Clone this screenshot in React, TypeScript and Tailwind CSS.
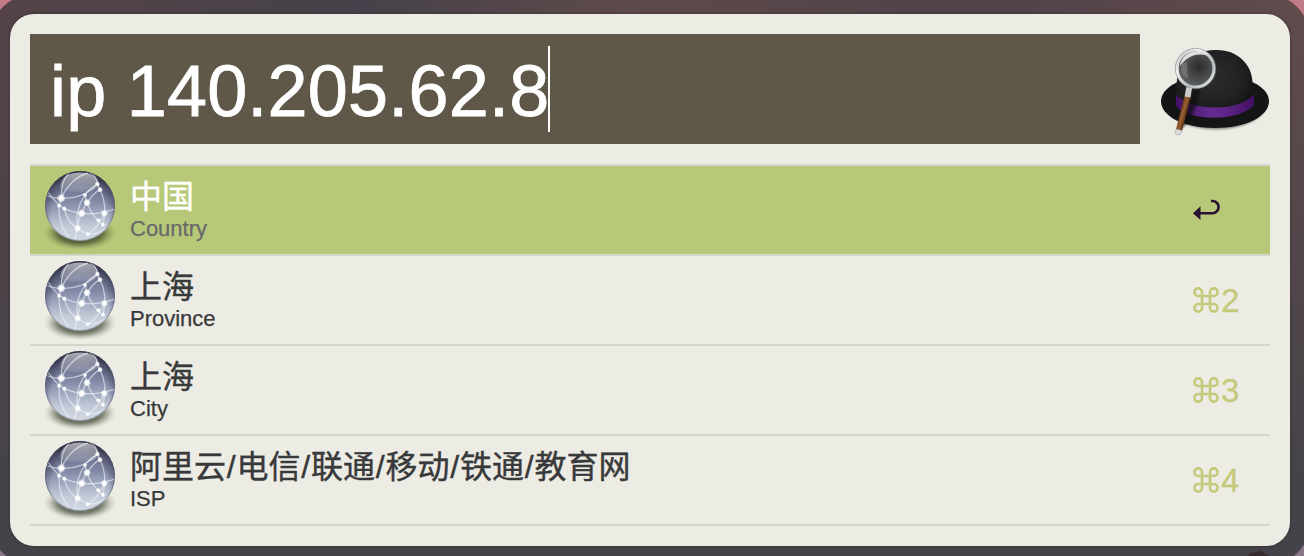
import React from "react";

function Globe() {
  return (
    <svg className="h-[88px] w-[80px] shrink-0" viewBox="0 0 80 88">
      <defs>
        <linearGradient id="sphere" x1="0" y1="0" x2="0" y2="1">
          <stop offset="0" stopColor="#555870" />
          <stop offset=".2" stopColor="#6e7490" />
          <stop offset=".42" stopColor="#8087a5" />
          <stop offset=".6" stopColor="#a0a8bf" />
          <stop offset=".8" stopColor="#c4ccd9" />
          <stop offset="1" stopColor="#d2d9e3" />
        </linearGradient>
        <radialGradient id="vignette" gradientUnits="userSpaceOnUse" cx="40" cy="50" r="46">
          <stop offset=".62" stopColor="#1c1c30" stopOpacity="0" />
          <stop offset=".82" stopColor="#1c1c30" stopOpacity=".38" />
          <stop offset="1" stopColor="#1c1c2c" stopOpacity=".85" />
        </radialGradient>
        <linearGradient id="gloss" x1="0" y1="0" x2="0" y2="1">
          <stop offset="0" stopColor="#fff" stopOpacity=".6" />
          <stop offset="1" stopColor="#fff" stopOpacity=".08" />
        </linearGradient>
        <radialGradient id="shade">
          <stop offset="0" stopColor="#26301a" stopOpacity=".95" />
          <stop offset=".6" stopColor="#26301a" stopOpacity=".6" />
          <stop offset=".85" stopColor="#26301a" stopOpacity=".15" />
          <stop offset="1" stopColor="#26301a" stopOpacity="0" />
        </radialGradient>
        <radialGradient id="spot">
          <stop offset="0" stopColor="#fff" />
          <stop offset=".5" stopColor="#fff" stopOpacity=".95" />
          <stop offset="1" stopColor="#fff" stopOpacity="0" />
        </radialGradient>
        <clipPath id="disc"><circle cx="40" cy="40" r="34.6" /></clipPath>
      </defs>
      <ellipse cx="40" cy="67" rx="36" ry="17" fill="url(#shade)" />
      <circle cx="40" cy="40" r="35" fill="url(#sphere)" />
      <circle cx="40" cy="40" r="35" fill="url(#vignette)" />
      <g clipPath="url(#disc)">
        <path d="M20 21C21 10 30 6.500 40 6.500S57 9 60 20C55 27 26 29 20 21Z" fill="url(#gloss)" />
        <g fill="none" stroke="#f0f3fa" strokeWidth="1.3" strokeOpacity=".62">
          <path d="M21.300 32.300C21 22 23 13 29 7" />
          <path d="M21.300 32.300C17 44 19 60 29 71" />
          <path d="M8 26C12 32 18 39 24.300 42.700C38 49 54 50 75 43" />
          <path d="M6 29C10 31 15 32.300 21.300 32.300C33 33 48 29 57.300 18" />
          <path d="M21.300 32.300C26 21 36 10 48 7" />
          <path d="M24.300 42.700C28 55 32 59 37.700 62.300C46 69 55 71 66 62" />
          <path d="M57.300 18C51 22 47 25 45 29C36 42 36 54 37.700 62.300" />
          <path d="M45 29C46 33 46 34 47 36.700C50 46 54 52 63 58.700" />
          <path d="M60 23.700C55 26 51 31 47 36.700C44 41 43 44 41.700 47.300C39 52 38 56 37.700 62.300" />
          <path d="M50 7C55 9 57 13 57.300 18L60 23.700C66 35 66 46 63 58.700" />
          <path d="M64.300 47.300C61 56 56 63 47.700 68.300" />
          <path d="M37.700 62.300C36 66 35 69 35 74" />
        </g>
        <g fill="url(#spot)">
          <circle cx="21.300" cy="32.300" r="4.500" />
          <circle cx="47" cy="36.700" r="4" />
          <circle cx="41.700" cy="47.300" r="4.300" />
          <circle cx="64.300" cy="47.300" r="3.800" />
          <circle cx="37.700" cy="62.300" r="3.800" />
          <circle cx="57.300" cy="18" r="2.600" />
          <circle cx="60" cy="23.700" r="2.900" />
          <circle cx="45" cy="29" r="2.300" />
          <circle cx="24.300" cy="42.700" r="2.600" />
          <circle cx="19" cy="39.700" r="2.500" />
          <circle cx="58.300" cy="54.300" r="2.400" />
          <circle cx="63" cy="58.700" r="2.500" />
          <circle cx="47.700" cy="68.300" r="2.200" />
        </g>
      </g>
      <circle cx="40" cy="40" r="34.5" fill="none" stroke="#4a4e66" strokeOpacity=".4" />
    </svg>
  );
}

function Hat() {
  return (
    <svg className="h-[110px] w-[130px] shrink-0" viewBox="1140 34 130 110">
      <defs>
        <radialGradient id="crown" cx=".45" cy=".45" r=".6">
          <stop offset="0" stopColor="#2b2e2d" />
          <stop offset=".7" stopColor="#202222" />
          <stop offset="1" stopColor="#111313" />
        </radialGradient>
        <linearGradient id="band">
          <stop offset="0" stopColor="#450f66" />
          <stop offset=".45" stopColor="#652c90" />
          <stop offset=".65" stopColor="#5c2587" />
          <stop offset="1" stopColor="#42105f" />
        </linearGradient>
        <linearGradient id="rim" x1="0" y1="0" x2="1" y2="1">
          <stop offset="0" stopColor="#b4b7ba" />
          <stop offset=".3" stopColor="#f0f1f2" />
          <stop offset=".65" stopColor="#b5b8bb" />
          <stop offset="1" stopColor="#eceeef" />
        </linearGradient>
        <radialGradient id="lens" cx=".6" cy=".45" r=".6">
          <stop offset="0" stopColor="#2b2c2d" />
          <stop offset="1" stopColor="#606263" />
        </radialGradient>
        <linearGradient id="wood" gradientUnits="userSpaceOnUse" x1="1180" y1="112" x2="1187" y2="114">
          <stop offset="0" stopColor="#70401e" />
          <stop offset=".45" stopColor="#9c6233" />
          <stop offset="1" stopColor="#4f2a12" />
        </linearGradient>
        <filter id="soft"><feGaussianBlur stdDeviation="1.3" /></filter>
      </defs>
      <ellipse cx="1216" cy="104" rx="50" ry="25.500" fill="#44443f" opacity=".6" filter="url(#soft)" />
      <path d="M1161 101C1161 92 1170 85 1180 81H1250C1260 85 1269 92 1269 101C1269 117 1245 128 1215 128S1161 117 1161 101Z" fill="#141515" />
      <path d="M1176 98C1176 86 1177 76 1179 71C1184 57 1199 50 1217 50C1238 50 1252 65 1252.500 82L1254 100C1240 116 1190 117 1176 98Z" fill="url(#crown)" />
      <path d="M1176 94C1188 111.500 1240 112.500 1254 94V105C1240 122 1188 121.500 1176 106Z" fill="url(#band)" />
      <path d="M1192 91L1199 89C1199 101 1194 115 1183 128L1181 127Z" fill="#080808" opacity=".65" filter="url(#soft)" />
      <circle cx="1195.500" cy="68.500" r="17.500" fill="url(#lens)" />
      <path d="M1180 66C1181 58 1187 52 1195 51.500C1202 51 1207 54 1208 56C1196 52 1187 57 1180 66Z" fill="#dfe0dc" />
      <path d="M1182 64Q1179 75 1188 78L1187 62Z" fill="#a8aaaa" opacity=".35" />
      <circle cx="1195.500" cy="68.500" r="18.500" fill="none" stroke="url(#rim)" strokeWidth="3.2" />
      <circle cx="1195.500" cy="68.500" r="20.200" fill="none" stroke="#85888a" strokeWidth=".6" />
      <path d="M1186.300 87L1192 88L1190.500 98L1184.500 97Z" fill="#c9cbcc" />
      <path d="M1184.400 96.500L1190.600 97.500L1182 131L1176 129.500Z" fill="url(#wood)" />
      <path d="M1176.200 129L1182.200 130.400L1180.500 134.500Q1177.500 136.500 1174.800 133Z" fill="#d8dad9" stroke="#888" strokeWidth=".4" />
    </svg>
  );
}

function ReturnKey() {
  return (
    <svg className="mt-px h-[24px] w-[28px]" viewBox="0 0 28 24" fill="none">
      <path d="M6 14.200H19.500A5.700 5.700 0 0 0 19.500 2H18" stroke="#291333" strokeWidth="2.6" />
      <path d="M0 14.200L7.500 7.300V21.100Z" fill="#291333" />
    </svg>
  );
}

function Shortcut({ digit }: { digit: string }) {
  return (
    <>
      <svg className="-mt-px h-[26px] w-[26px]" viewBox="0 0 26 26" fill="none" stroke="#c5c97b" strokeWidth="2.6">
        <path d="M9 9H17V17H9ZM9 9V5.2A3.8 3.8 0 1 0 5.200 9H9M17 9H20.800A3.8 3.8 0 1 0 17 5.200V9M17 17V20.800A3.8 3.8 0 1 0 20.800 17H17M9 17H5.200A3.8 3.8 0 1 0 9 20.800V17" />
      </svg>
      <span className="ml-[2px] w-[20px] text-[33px] leading-[26px] text-[#c5c97b] [-webkit-text-stroke:0.3px]">{digit}</span>
    </>
  );
}

function Title({ text }: { text: string }) {
  const parts = text.split("/");
  return (
    <>
      {parts.map((part, i) => (
        <React.Fragment key={i}>
          {i > 0 && <span className="mx-[0.8px]">/</span>}
          {part}
        </React.Fragment>
      ))}
    </>
  );
}

const rows = [
  { title: "中国", kind: "Country" },
  { title: "上海", kind: "Province" },
  { title: "上海", kind: "City" },
  { title: "阿里云/电信/联通/移动/铁通/教育网", kind: "ISP" },
];

export default function App() {
  return (
    <main className="relative h-[556px] w-[1304px] overflow-hidden bg-[linear-gradient(to_bottom,#c47b88,#877789)] pb-[10px] pl-[10px] pr-[14px] pt-[14px] font-['Liberation_Sans','Noto_Sans_CJK_SC',sans-serif]">
      <div className="absolute -left-[10px] -top-[6px] h-[572px] w-[1320px] rounded-[44px] bg-[linear-gradient(to_bottom,transparent,#454349_85%),linear-gradient(to_right,#554347,#46414a_28%,#5e4a4a_48%,#504249_74%,#614b4c)]" />
      <svg className="absolute left-[1246px] top-[548px] h-[8px] w-[32px]" viewBox="0 0 32 8">
        <path d="M2 8L5 5L9 4.500L13 3L17 4L19 6L24 8Z" fill="#352a2c" />
      </svg>
      <section className="relative h-[532px] rounded-[24px] bg-[#edece4] px-5 pt-5 shadow-[0_0_3px_rgba(20,15,20,0.5)]">
        <header className="flex h-[110px]">
          <div className="flex w-[1110px] items-center bg-[#5f5747] pl-[20px]">
            <span className="w-[498px] whitespace-pre pt-[4px] text-[72px] leading-[86px] tracking-[0.2px] text-white [-webkit-text-stroke:0.8px]">ip 140.205.62.8</span>
            <span className="h-[86px] w-[2px] bg-white" />
          </div>
          <Hat />
        </header>
        <ul className="mt-5 border-t-2 border-[#d5d5cc]">
          {rows.map((row, i) => (
            <li key={i} className={`flex h-[90px] border-b-2 border-[#d5d5cc] pl-[10px] ${i === 0 ? "bg-[#b7c878]" : ""}`}>
              <Globe />
              <div className="ml-[10px] flex-1 pt-[12px]">
                <div className={`h-[39px] text-[32px] leading-[38px] [-webkit-text-stroke:0.4px] ${i === 0 ? "text-white" : "text-[#38393a]"}`}>
                  <Title text={row.title} />
                </div>
                <div className={`text-[22px] leading-[24px] [-webkit-text-stroke:0.25px] ${i === 0 ? "text-[#69696a]" : "text-[#38393a]"}`}>{row.kind}</div>
              </div>
              <div className="flex w-[77px] items-start pt-[32px]">
                {i === 0 ? <ReturnKey /> : <Shortcut digit={String(i + 1)} />}
              </div>
            </li>
          ))}
        </ul>
      </section>
    </main>
  );
}
